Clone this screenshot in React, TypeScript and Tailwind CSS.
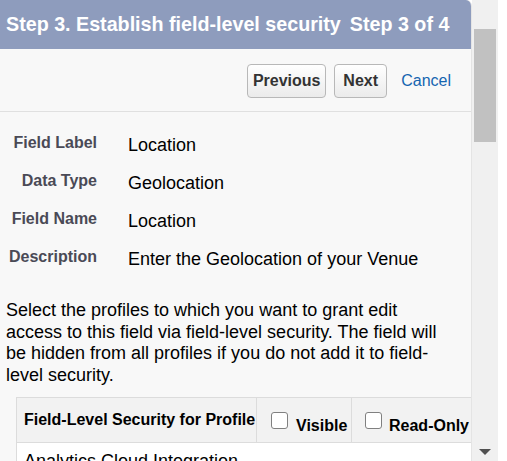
import React from 'react';

const fields = [
  { label: 'Field Label', value: 'Location' },
  { label: 'Data Type', value: 'Geolocation' },
  { label: 'Field Name', value: 'Location' },
  { label: 'Description', value: 'Enter the Geolocation of your Venue' },
];

function Checkbox() {
  return <span className="block w-[17px] h-[17px] shrink-0 rounded-[3px] border border-[#808080] bg-white" />;
}

export default function App() {
  return (
    <div className="flex h-[461px] w-[507px] overflow-hidden bg-white font-['Liberation_Sans',Arial,sans-serif]">
      {/* Wizard panel */}
      <div className="w-[472px] shrink-0 flex flex-col bg-[#f8f8f8] border-r border-[#e4e4e4] rounded-tr-[6px] overflow-hidden">
        <div className="h-[49px] shrink-0 bg-[#8e9cbd] flex items-center gap-[9px] pl-[6px] text-white font-bold text-[19.7px] leading-[23px] whitespace-nowrap">
          <span>Step 3. Establish field-level security</span>
          <span>Step 3 of 4</span>
        </div>

        {/* Buttons */}
        <div className="h-[63px] shrink-0 flex items-start justify-end pt-[15px] pr-[20px] border-b border-[#e0e0e0]">
          <button className="w-[79px] h-[34px] rounded-[4px] border border-[#b8b8b8] bg-gradient-to-b from-white to-[#ebebeb] text-[#333] font-bold text-[16px] leading-[18px]">
            Previous
          </button>
          <button className="ml-[8px] w-[53px] h-[34px] rounded-[4px] border border-[#b8b8b8] bg-gradient-to-b from-white to-[#ebebeb] text-[#333] font-bold text-[16px] leading-[18px]">
            Next
          </button>
          <a className="ml-[14px] h-[34px] flex items-center text-[16px] text-[#1565b0]">Cancel</a>
        </div>

        {/* Field info */}
        <div className="pt-[14px] flex flex-col">
          {fields.map((f) => (
            <div key={f.label} className="flex items-center h-[38px] whitespace-nowrap">
              <span className="w-[97px] mb-[4px] text-right text-[16px] leading-[18px] font-bold text-[#4a4a56]">{f.label}</span>
              <span className="ml-[31px] text-[18px] leading-[21px] text-black">{f.value}</span>
            </div>
          ))}
        </div>

        <p className="mt-[22px] ml-[6px] w-[440px] text-[18px] leading-[21.5px] text-black">
          Select the profiles to which you want to grant edit access to this field via field-level security. The field will be hidden from all profiles if you do not add it to field-level security.
        </p>

        {/* Profiles table */}
        <div className="mt-[11px] ml-[16px] flex-1 flex flex-col border-l border-t border-[#dcdcdc] whitespace-nowrap">
          <div className="h-[45px] shrink-0 flex bg-[#f2f2f2] border-b border-[#dcdcdc]">
            <div className="w-[239px] shrink-0 pl-[7px] pt-[13px] text-[16px] leading-[18px] font-bold text-black">
              Field-Level Security for Profile
            </div>
            <div className="w-[95px] shrink-0 border-l border-[#dcdcdc] flex items-start pl-[14px]">
              <span className="mt-[14px]"><Checkbox /></span>
              <span className="ml-[8px] mt-[19px] text-[16px] leading-[18px] font-bold text-black">Visible</span>
            </div>
            <div className="flex-1 border-l border-[#dcdcdc] flex items-start pl-[13px]">
              <span className="mt-[14px]"><Checkbox /></span>
              <span className="ml-[7px] mt-[19px] text-[16px] leading-[18px] font-bold text-black">Read-Only</span>
            </div>
          </div>
          <div className="flex-1 bg-white pl-[7px] pt-[8px] text-[18px] leading-[21px] text-black">
            Analytics Cloud Integration
          </div>
        </div>
      </div>

      {/* Scrollbar */}
      <div className="w-[26px] shrink-0 bg-[#f0f0f0] flex flex-col items-center pt-[29px] pb-[6px]">
        <div className="w-[22px] h-[113px] bg-[#c1c1c1]" />
        <div className="mt-auto w-0 h-0 border-l-[6px] border-r-[6px] border-t-[6px] border-l-transparent border-r-transparent border-t-[#505050]" />
      </div>
      <div className="flex-1 bg-white" />
    </div>
  );
}
